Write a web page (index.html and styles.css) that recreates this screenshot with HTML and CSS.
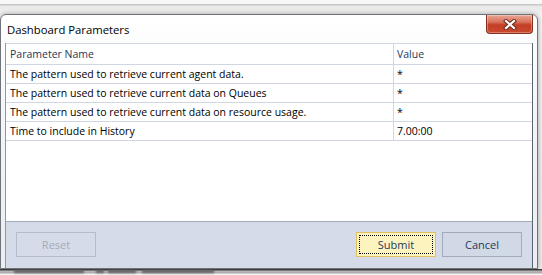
FILE: index.html
```html
<!DOCTYPE html>
<html lang="en">
<head>
    <meta charset="UTF-8" />
    <title>Dashboard Parameters</title>
    <link rel="stylesheet" href="styles.css">
</head>
<body>
    <div class="screen">
        <div class="desk-top"></div>

        <!-- Dialog window -->
        <div class="window">
            <div class="title-bar">
                <span class="title">Dashboard Parameters</span>
                <div class="close-btn">
                    <svg width="14" height="11" viewBox="0 0 14 11">
                        <path d="M3 2 L11 9 M11 2 L3 9" stroke="#6b2a1c" stroke-width="4.2" stroke-linecap="square" fill="none" />
                        <path d="M3 2 L11 9 M11 2 L3 9" stroke="#ffffff" stroke-width="2.2" stroke-linecap="square" fill="none" />
                    </svg>
                </div>
            </div>

            <div class="client">
                <div class="grid">
                    <div class="grid-row grid-head">
                        <div class="cell name">Parameter Name</div>
                        <div class="cell value">Value</div>
                    </div>
                    <div class="grid-row">
                        <div class="cell name">The pattern used to retrieve current agent data.</div>
                        <div class="cell value">*</div>
                    </div>
                    <div class="grid-row">
                        <div class="cell name">The pattern used to retrieve current data on Queues</div>
                        <div class="cell value">*</div>
                    </div>
                    <div class="grid-row">
                        <div class="cell name">The pattern used to retrieve current data on resource usage.</div>
                        <div class="cell value">*</div>
                    </div>
                    <div class="grid-row">
                        <div class="cell name">Time to include in History</div>
                        <div class="cell value">7.00:00</div>
                    </div>
                </div>

                <div class="footer">
                    <button class="btn disabled">Reset</button>
                    <div class="spacer"></div>
                    <button class="btn default"><span class="focus">Submit</span></button>
                    <button class="btn">Cancel</button>
                </div>
            </div>
        </div>

        <div class="desk-bottom">
            <span class="blur b1"></span>
            <span class="blur b2"></span>
            <span class="blur b3"></span>
            <span class="blur b4"></span>
        </div>
    </div>
</body>
</html>
```

FILE: styles.css
```css
* {
    box-sizing: border-box;
    margin: 0;
    padding: 0;
}

body {
    background: #efefef;
    font-family: 'Open Sans', 'Noto Sans', sans-serif;
    font-size: 10.5px;
    color: #000;
}

.screen {
    width: 542px;
    height: 275px;
    overflow: hidden;
    background: linear-gradient(#f4f4f4, #ececec);
}

/* desktop strip above the dialog */
.desk-top {
    height: 14px;
    border-top: 4px solid #f7f7f7;
    background: linear-gradient(#c8c8c8 0, #c8c8c8 1px, #e9e9e9 2px, #f1f1f1 100%);
}

.window {
    width: 538px;
    height: 255px;
    border: 1px solid #6f737a;
    border-radius: 6px 6px 0 0;
    padding: 0 4px;
    background: linear-gradient(#ffffff, #f3f5f8 40%, #eaedf1);
    box-shadow: 0 0 5px rgba(0, 0, 0, 0.35);
    display: flex;
    flex-direction: column;
}

.title-bar {
    height: 28px;
    display: flex;
    justify-content: space-between;
    align-items: flex-start;
}

.title {
    font-size: 11.3px;
    line-height: 16px;
    padding: 7px 0 0 2px;
    color: #000;
}

.close-btn {
    width: 47px;
    height: 19px;
    border: 1px solid #83301f;
    border-top: none;
    border-radius: 0 0 4px 4px;
    background: linear-gradient(#e9a797 0%, #d8705a 40%, #c23f26 55%, #cb4a31 100%);
    display: flex;
    align-items: center;
    justify-content: center;
    box-shadow: inset 0 0 0 1px rgba(255, 255, 255, 0.3);
}

.close-btn svg {
    display: block;
}

.client {
    flex: 1;
    display: flex;
    flex-direction: column;
    border-left: 1px solid #8f97a6;
    border-right: 1px solid #5d6470;
    background: #fff;
}

.grid {
    flex: 1;
    background: #fff;
}

.grid-row {
    display: grid;
    grid-template-columns: 388px 1fr;
    height: 19px;
    border-bottom: 1px solid #d0d6e2;
}

.grid-head {
    height: 22px;
    border-top: 1px solid #d0d6e2;
    color: #1e395b;
}

.cell {
    line-height: 18px;
    white-space: nowrap;
    overflow: hidden;
}

.grid-head .cell {
    line-height: 20px;
}

.cell.name {
    padding-left: 4px;
    border-right: 1px solid #d0d6e2;
}

.cell.value {
    padding-left: 3px;
}

.footer {
    height: 47px;
    border-top: 1px solid #a3abbb;
    background: #d5dbe8;
    display: flex;
    gap: 6px;
    padding: 10px 10px 0 10px;
    align-items: flex-start;
}

.spacer {
    flex: 1;
}

.btn {
    width: 80px;
    height: 25px;
    border: 1px solid #a2aabb;
    background: #d2d9e6;
    color: #1e395b;
    font-family: 'Open Sans', 'Noto Sans', sans-serif;
    font-size: 11px;
    display: flex;
    align-items: center;
    justify-content: center;
}

.btn.disabled {
    color: #a3abbb;
    border-color: #b4bbc9;
    background: #d5dbe8;
}

.btn.default {
    border-color: #e2c060;
    background: #fdf3bf;
    padding: 2px;
}

.focus {
    width: 100%;
    height: 100%;
    border: 1px dotted #000;
    display: flex;
    align-items: center;
    justify-content: center;
}

/* blurred desktop below the dialog */
.desk-bottom {
    height: 7px;
    position: relative;
    background: linear-gradient(#3c3c3c 0, #3c3c3c 1px, #b9b9b9 2px, #a9a9a9 4px, #f4f4f4 5px);
}

.blur {
    position: absolute;
    top: 1px;
    height: 3px;
    background: #5e5e5e;
    filter: blur(1px);
}

.b1 { left: 14px; width: 70px; }
.b2 { left: 96px; width: 8px; }
.b3 { left: 108px; width: 28px; }
.b4 { left: 142px; width: 72px; }
```
